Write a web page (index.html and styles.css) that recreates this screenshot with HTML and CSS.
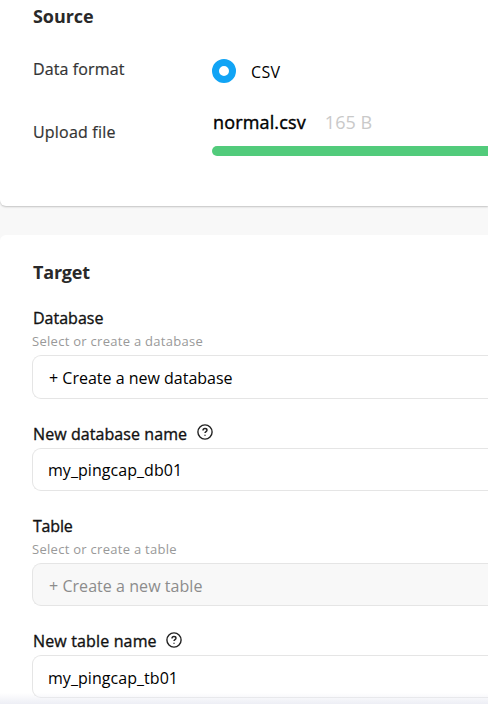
FILE: index.html
```html
<!DOCTYPE html>
<html lang="en">
<head>
<meta charset="utf-8">
<title>Import data</title>
<link rel="stylesheet" href="styles.css">
</head>
<body>
<main class="page">
  <section class="card source">
    <h2 class="title title-source">Source</h2>
    <div class="row format-row">
      <span class="row-label data-format">Data format</span>
      <div class="radio"><span class="radio-dot"></span><span class="radio-text">CSV</span></div>
    </div>
    <div class="row upload-row">
      <span class="row-label upload-label">Upload file</span>
      <div class="upload">
        <div class="file"><span class="file-name">normal.csv</span><span class="file-size">165 B</span></div>
        <div class="progress"></div>
      </div>
    </div>
  </section>
  <section class="card target">
    <h2 class="title title-target">Target</h2>
    <div class="field field-database">
      <div class="label"><span class="label-database">Database</span></div>
      <div class="hint">Select or create a database</div>
      <div class="input tall">+ Create a new database</div>
    </div>
    <div class="field field-name">
      <div class="label"><span>New database name</span>
        <svg class="help" viewBox="0 0 16 16"><circle cx="8" cy="8" r="7.1"/><path d="M6 6.4C6 5.2 6.8 4.5 8 4.5s2 .7 2 1.7c0 1.3-2 1.5-2 2.8"/><path d="M8 10.7v1.1"/></svg>
      </div>
      <div class="input">my_pingcap_db01</div>
    </div>
    <div class="field">
      <div class="label"><span class="label-table">Table</span></div>
      <div class="hint">Select or create a table</div>
      <div class="input disabled">+ Create a new table</div>
    </div>
    <div class="field field-name field-last">
      <div class="label"><span>New table name</span>
        <svg class="help" viewBox="0 0 16 16"><circle cx="8" cy="8" r="7.1"/><path d="M6 6.4C6 5.2 6.8 4.5 8 4.5s2 .7 2 1.7c0 1.3-2 1.5-2 2.8"/><path d="M8 10.7v1.1"/></svg>
      </div>
      <div class="input">my_pingcap_tb01</div>
    </div>
  </section>
  <footer class="footer"></footer>
</main>
</body>
</html>
```
FILE: styles.css
```css
* { box-sizing: border-box; }
body {
  margin: 0;
  overflow: hidden;
  background: #f8f8f8;
  color: #000;
  font: 400 16px/24px "Open Sans", "Noto Sans", sans-serif;
}
.page { position: relative; height: 709px; overflow: hidden; }
span, .hint, .title, .input { white-space: nowrap; }
.card { background: #fff; padding-left: 33px; }
.source {
  height: 206px;
  padding-top: 4px;
  border-bottom-left-radius: 6px;
  box-shadow: 0 1px 2px rgba(0, 0, 0, .22);
}
.target {
  height: 480px;
  margin-top: 29px;
  padding-top: 25px;
  padding-left: 32px;
  border-top-left-radius: 6px;
}
.title { margin: 0; font-size: 18px; font-weight: 700; line-height: 24px; color: #292929; }
.title-source { letter-spacing: -.05px; }
.title-target { padding-left: 1px; letter-spacing: -.2px; }
.row { display: flex; }
.row-label { width: 179px; color: #333; -webkit-text-stroke: .2px #333; }
.format-row { margin-top: 29px; height: 56px; }
.data-format { letter-spacing: .12px; }
.radio { display: flex; gap: 15px; padding-top: 2px; }
.radio-dot { width: 24px; height: 24px; border: 7.5px solid #11a4f5; border-radius: 50%; background: #fff; }
.radio-text { padding-top: 1px; letter-spacing: .3px; }
.upload-label { padding-top: 7px; letter-spacing: .2px; }
.upload { flex: 1; }
.file { display: flex; gap: 19px; height: 33px; padding-left: 1px; margin-top: -3px; font-size: 18px; }
.file-name { letter-spacing: .15px; -webkit-text-stroke: .4px #000; }
.file-size { color: #c9c9c9; letter-spacing: .05px; }
.progress { height: 10px; margin-top: 3px; border-radius: 5px 0 0 5px; background: #52cb7b; }
.field { height: 115px; }
.field-database { height: 116px; margin-top: 22px; }
.field-name { height: 92px; }
.label { display: flex; gap: 10px; height: 24px; padding-left: 1px; color: #111; letter-spacing: .08px; -webkit-text-stroke: .35px #111; }
.field-name .label { height: 26px; }
.label-database { letter-spacing: 0; }
.label-table { letter-spacing: -.2px; }
.hint { height: 25px; font-size: 13px; line-height: 22px; letter-spacing: .28px; color: #999; }
.help { width: 16px; height: 16px; margin-top: 2px; fill: none; stroke: #222; stroke-width: 1.4; }
.input { height: 43px; border: 1px solid #e5e5e5; border-right: 0; border-radius: 9px 0 0 9px; padding: 9px 0 0 15px; letter-spacing: .05px; }
.tall { height: 44px; padding: 10px 0 0 16px; letter-spacing: 0; }
.disabled { background: #f8f8f8; color: #8c8c8c; padding: 10px 0 0 16px; }
.field-last .label { gap: 9px; letter-spacing: .15px; }
.field-last .help { margin-top: 3px; }
.field-last .input { padding-top: 10px; }
.footer {
  position: absolute;
  inset: auto 0 0;
  height: 16px;
  background: linear-gradient(rgba(236, 237, 245, 0), #edeef5 11px, #fff 11px);
}
```
